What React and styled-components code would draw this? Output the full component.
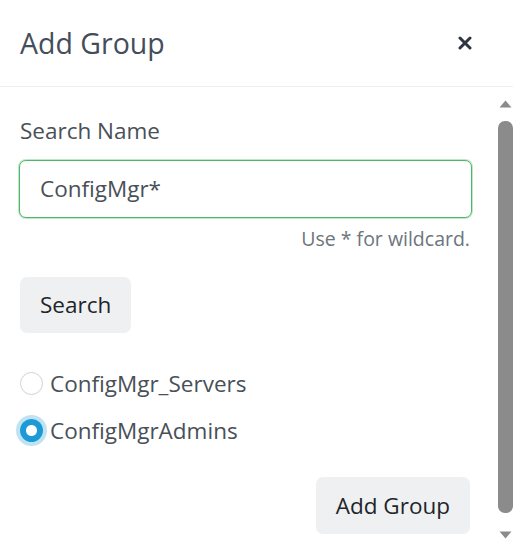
import React, { useState } from "react";
import styled, { createGlobalStyle } from "styled-components";

const GlobalStyle = createGlobalStyle`
  html, body {
    margin: 0;
    padding: 0;
    background: #fff;
  }
  body {
    font-family: "Open Sans", "Noto Sans", sans-serif;
    color: #495057;
  }
`;

const Modal = styled.div`
  display: flex;
  flex-direction: column;
  width: 513px;
  height: 552px;
  background: #fff;
  overflow: hidden;
`;

const Header = styled.div`
  flex: 0 0 auto;
  height: 87px;
  box-sizing: border-box;
  display: flex;
  align-items: center;
  justify-content: space-between;
  padding: 0 40px 0 20px;
  border-bottom: 1px solid #eeeff1;
`;

const Title = styled.h5`
  margin: 0;
  font-size: 28.5px;
  font-weight: 400;
  line-height: 1;
  color: #444e5a;
  padding-top: 1px;
`;

const CloseButton = styled.button`
  border: 0;
  background: none;
  padding: 0;
  width: 16px;
  height: 16px;
  display: flex;
  align-items: center;
  justify-content: center;
  cursor: pointer;
`;

const Body = styled.div`
  flex: 1 1 auto;
  min-height: 0;
  display: flex;
  overflow: hidden;
`;

const Content = styled.div`
  flex: 1 1 auto;
  align-self: flex-start;
  min-width: 0;
  padding: 27px 25px 24px 20px;
  display: flex;
  flex-direction: column;
`;

const Scrollbar = styled.div`
  flex: 0 0 16px;
  display: flex;
  flex-direction: column;
  align-items: center;
  background: #fff;
`;

const ScrollArrow = styled.div`
  flex: 0 0 34px;
  width: 16px;
  display: flex;
  align-items: center;
  justify-content: center;
`;

const Thumb = styled.div`
  flex: 1 1 auto;
  width: 15px;
  margin-bottom: 5px;
  border-radius: 7px;
  background: #8b8b8b;
`;

const Label = styled.label`
  font-size: 22.5px;
  line-height: 33.75px;
  color: #495057;
  margin-bottom: 12px;
`;

const Input = styled.input`
  box-sizing: border-box;
  width: 453px;
  height: 58px;
  padding: 0 20px;
  font-family: inherit;
  font-size: 22.5px;
  color: #495057;
  border: 1px solid #4fb866;
  border-radius: 7px;
  box-shadow: 0 0 0 1px rgba(79, 184, 102, 0.35);
  outline: none;
  margin-left: -1px;
`;

const Hint = styled.small`
  display: block;
  text-align: right;
  font-size: 19.5px;
  line-height: 29px;
  color: #6c757d;
  margin-top: 6px;
  padding-right: 2px;
`;

const Button = styled.button`
  align-self: ${(p) => (p.$right ? "flex-end" : "flex-start")};
  height: ${(p) => p.$height || 56}px;
  padding: 0 20px;
  margin-top: ${(p) => p.$top || 0}px;
  margin-right: ${(p) => (p.$right ? 2 : 0)}px;
  border: 0;
  border-radius: 7px;
  background: #eff0f2;
  color: #212529;
  font-family: inherit;
  font-size: 22.5px;
  cursor: pointer;
`;

const RadioList = styled.div`
  display: flex;
  flex-direction: column;
  margin-top: 27px;
`;

const RadioRow = styled.label`
  display: flex;
  align-items: center;
  height: 47px;
  gap: 7px;
  font-size: 22.5px;
  color: #495057;
  cursor: pointer;
`;

const RadioDot = styled.span`
  box-sizing: border-box;
  flex: 0 0 auto;
  width: 23px;
  height: 23px;
  border-radius: 50%;
  border: ${(p) => (p.$checked ? "0" : "1px solid #cfd3d7")};
  background: ${(p) =>
    p.$checked
      ? "radial-gradient(circle, #fff 0 5px, #1b9ad6 6px)"
      : "#fff"};
  box-shadow: ${(p) =>
    p.$checked ? "0 0 0 4px rgba(27, 154, 214, 0.28)" : "none"};
`;

const groups = ["ConfigMgr_Servers", "ConfigMgrAdmins"];

export default function App() {
  const [selected, setSelected] = useState("ConfigMgrAdmins");

  return (
    <>
      <GlobalStyle />
      <Modal>
        <Header>
          <Title>Add Group</Title>
          <CloseButton aria-label="Close">
            <svg width="14" height="14" viewBox="0 0 14 14">
              <path
                d="M2 2 L12 12 M12 2 L2 12"
                stroke="#2f3540"
                strokeWidth="3"
                strokeLinecap="round"
              />
            </svg>
          </CloseButton>
        </Header>
        <Body>
          <Content>
            <Label>Search Name</Label>
            <Input defaultValue="ConfigMgr*" />
            <Hint>Use * for wildcard.</Hint>
            <Button $top={24}>Search</Button>
            <RadioList>
              {groups.map((g) => (
                <RadioRow key={g} onClick={() => setSelected(g)}>
                  <RadioDot $checked={selected === g} />
                  {g}
                </RadioRow>
              ))}
            </RadioList>
            <Button $right $top={23} $height={57}>
              Add Group
            </Button>
          </Content>
          <Scrollbar>
            <ScrollArrow>
              <svg width="13" height="8" viewBox="0 0 13 8">
                <path d="M6.5 0.5 L12.5 7.5 L0.5 7.5 Z" fill="#8b8b8b" />
              </svg>
            </ScrollArrow>
            <Thumb />
            <ScrollArrow>
              <svg width="13" height="8" viewBox="0 0 13 8">
                <path d="M0.5 0.5 L12.5 0.5 L6.5 7.5 Z" fill="#8b8b8b" />
              </svg>
            </ScrollArrow>
          </Scrollbar>
        </Body>
      </Modal>
    </>
  );
}
